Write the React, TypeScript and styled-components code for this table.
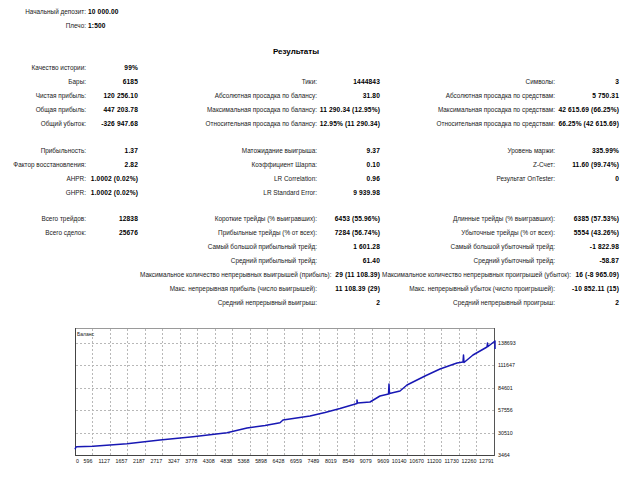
import React from "react";
import styled, { createGlobalStyle } from "styled-components";

const Global = createGlobalStyle`
  html, body { margin: 0; padding: 0; background: #ffffff; }
  body { font-family: "Liberation Sans", Arial, sans-serif; color: #000; }
`;

const Page = styled.div`
  width: 640px;
  height: 480px;
  overflow: hidden;
  padding-top: 5px;
  box-sizing: border-box;
`;

const HeaderGrid = styled.div`
  display: grid;
  grid-template-columns: 86px auto;
  column-gap: 2px;
`;

const Label = styled.div`
  font-size: 6.4px;
  line-height: 14px;
  height: 14px;
  text-align: right;
  white-space: nowrap;
  color: #1a1a1a;
`;

const Value = styled.div<{ $left?: boolean }>`
  font-size: 6.6px;
  font-weight: bold;
  line-height: 14px;
  height: 14px;
  text-align: ${(p) => (p.$left ? "left" : "right")};
  white-space: nowrap;
  letter-spacing: 0.15px;
`;

const Title = styled.div`
  width: 592px;
  margin-top: 12px;
  text-align: center;
  font-size: 8px;
  font-weight: bold;
  line-height: 14px;
  height: 14px;
`;

const Section = styled.div<{ $gap: number }>`
  display: grid;
  grid-template-columns: 86px 50px 177px 61px 173px 62px;
  column-gap: 2px;
  margin-top: ${(p) => p.$gap}px;
`;

const ChartWrap = styled.div`
  margin-top: 16px;
  margin-left: 75px;
`;

type Row = [string, string, string, string, string, string];

const sec1: Row[] = [
  ["Качество истории:", "99%", "", "", "", ""],
  ["Бары:", "6185", "Тики:", "1444843", "Символы:", "3"],
  ["Чистая прибыль:", "120 256.10", "Абсолютная просадка по балансу:", "31.80", "Абсолютная просадка по средствам:", "5 750.31"],
  ["Общая прибыль:", "447 203.78", "Максимальная просадка по балансу:", "11 290.34 (12.95%)", "Максимальная просадка по средствам:", "42 615.69 (66.25%)"],
  ["Общий убыток:", "-326 947.68", "Относительная просадка по балансу:", "12.95% (11 290.34)", "Относительная просадка по средствам:", "66.25% (42 615.69)"],
];

const sec2: Row[] = [
  ["Прибыльность:", "1.37", "Матожидание выигрыша:", "9.37", "Уровень маржи:", "335.99%"],
  ["Фактор восстановления:", "2.82", "Коэффициент Шарпа:", "0.10", "Z-Счет:", "11.60 (99.74%)"],
  ["AHPR:", "1.0002 (0.02%)", "LR Correlation:", "0.96", "Результат OnTester:", "0"],
  ["GHPR:", "1.0002 (0.02%)", "LR Standard Error:", "9 939.98", "", ""],
];

const sec3: Row[] = [
  ["Всего трейдов:", "12838", "Короткие трейды (% выигравших):", "6453 (55.96%)", "Длинные трейды (% выигравших):", "6385 (57.53%)"],
  ["Всего сделок:", "25676", "Прибыльные трейды (% от всех):", "7284 (56.74%)", "Убыточные трейды (% от всех):", "5554 (43.26%)"],
  ["", "", "Самый большой прибыльный трейд:", "1 601.28", "Самый большой убыточный трейд:", "-1 822.98"],
  ["", "", "Средний прибыльный трейд:", "61.40", "Средний убыточный трейд:", "-58.87"],
  ["", "", "Максимальное количество непрерывных выигрышей (прибыль):", "29 (11 108.39)", "Максимальное количество непрерывных проигрышей (убыток):", "16 (-8 965.09)"],
  ["", "", "Макс. непрерывная прибыль (число выигрышей):", "11 108.39 (29)", "Макс. непрерывный убыток (число проигрышей):", "-10 852.11 (15)"],
  ["", "", "Средний непрерывный выигрыш:", "2", "Средний непрерывный проигрыш:", "2"],
];

const Stats: React.FC<{ rows: Row[]; gap: number }> = ({ rows, gap }) => (
  <Section $gap={gap}>
    {rows.map((r, i) => (
      <React.Fragment key={i}>
        <Label>{r[0]}</Label>
        <Value>{r[1]}</Value>
        <Label>{r[2]}</Label>
        <Value>{r[3]}</Value>
        <Label>{r[4]}</Label>
        <Value>{r[5]}</Value>
      </React.Fragment>
    ))}
  </Section>
);

const W = 420;
const TOP = 2;
const BOTTOM = 129;
const STEP_X = 17.45;
const yLines = [0, 1, 2, 3, 4, 5].map((k) => BOTTOM - 22.4 * k);
const yLabels = ["3464", "30510", "57556", "84601", "111647", "138693"];
const xLabels = [
  "0", "596", "1127", "1657", "2187", "2717", "3247", "3778", "4308", "4838", "5368", "5898",
  "6428", "6959", "7489", "8019", "8549", "9079", "9609", "10140", "10670", "11200", "11730", "12260", "12791",
];

const curve: [number, number][] = [
  [0, 123.3], [1, 121], [2, 120.7], [18, 120.2], [35, 119], [52, 117.7], [85, 114], [118, 110.7],
  [152, 106.7], [172, 102], [190, 99.5], [205, 96.7], [208, 94], [235, 90], [250, 86.5], [265, 82.5],
  [282, 77.5], [282, 74], [282.5, 77], [295, 76], [305, 70], [313.5, 68], [314, 58], [314.5, 67.5],
  [325, 65], [332, 59], [350, 50], [365, 43], [382, 37], [388, 36], [388.5, 29], [389, 36.5],
  [398, 29], [412, 21], [412.5, 17], [413, 20.5], [420, 15], [420, 23],
];

const ChartSvg = styled.svg`
  display: block;
  overflow: visible;
  font-family: "Liberation Sans", Arial, sans-serif;
`;

const BalanceChart: React.FC = () => (
  <ChartSvg width={450} height={145} viewBox="0 0 450 145">
    <rect x={0.5} y={TOP + 0.5} width={W - 1} height={BOTTOM - TOP} fill="#ffffff" stroke="#9a9a9a" strokeWidth={1} />
    {xLabels.slice(1, 24).map((_, i) => {
      const x = Math.round(STEP_X * (i + 1)) + 0.5;
      return <line key={"v" + i} x1={x} x2={x} y1={TOP + 1} y2={BOTTOM} stroke="#b8b8b8" strokeWidth={1} strokeDasharray="2 2" />;
    })}
    {yLines.slice(1).map((y, i) => (
      <line key={"h" + i} x1={1} x2={W - 1} y1={Math.round(y) + 0.5} y2={Math.round(y) + 0.5} stroke="#b8b8b8" strokeWidth={1} strokeDasharray="2 2" />
    ))}
    <line x1={0.5} x2={0.5} y1={TOP} y2={BOTTOM + 1} stroke="#444" strokeWidth={1} />
    <line x1={0} x2={W} y1={BOTTOM + 0.5} y2={BOTTOM + 0.5} stroke="#444" strokeWidth={1} />
    <line x1={W - 0.5} x2={W - 0.5} y1={TOP} y2={BOTTOM + 1} stroke="#555" strokeWidth={1} />
    <text x={2} y={10} fontSize={5} fill="#222">Баланс</text>
    <polyline
      points={curve.map(([x, y]) => `${x},${y}`).join(" ")}
      fill="none"
      stroke="#1818b4"
      strokeWidth={1.5}
      strokeLinejoin="round"
    />
    {yLabels.map((t, i) => (
      <text key={t} x={W + 3} y={yLines[i] + 2} fontSize={5.3} fill="#111">{t}</text>
    ))}
    {xLabels.map((t, i) => (
      <text
        key={t}
        x={i === 0 ? 1 : STEP_X * i}
        y={BOTTOM + 8}
        fontSize={5.3}
        fill="#111"
        textAnchor={i === 0 ? "start" : "end"}
      >
        {t}
      </text>
    ))}
  </ChartSvg>
);

export default function App() {
  return (
    <Page>
      <Global />
      <HeaderGrid>
        <Label>Начальный депозит:</Label>
        <Value $left>10 000.00</Value>
        <Label>Плечо:</Label>
        <Value $left>1:500</Value>
      </HeaderGrid>
      <Title>Результаты</Title>
      <Stats rows={sec1} gap={2} />
      <Stats rows={sec2} gap={13} />
      <Stats rows={sec3} gap={12} />
      <ChartWrap>
        <BalanceChart />
      </ChartWrap>
    </Page>
  );
}
